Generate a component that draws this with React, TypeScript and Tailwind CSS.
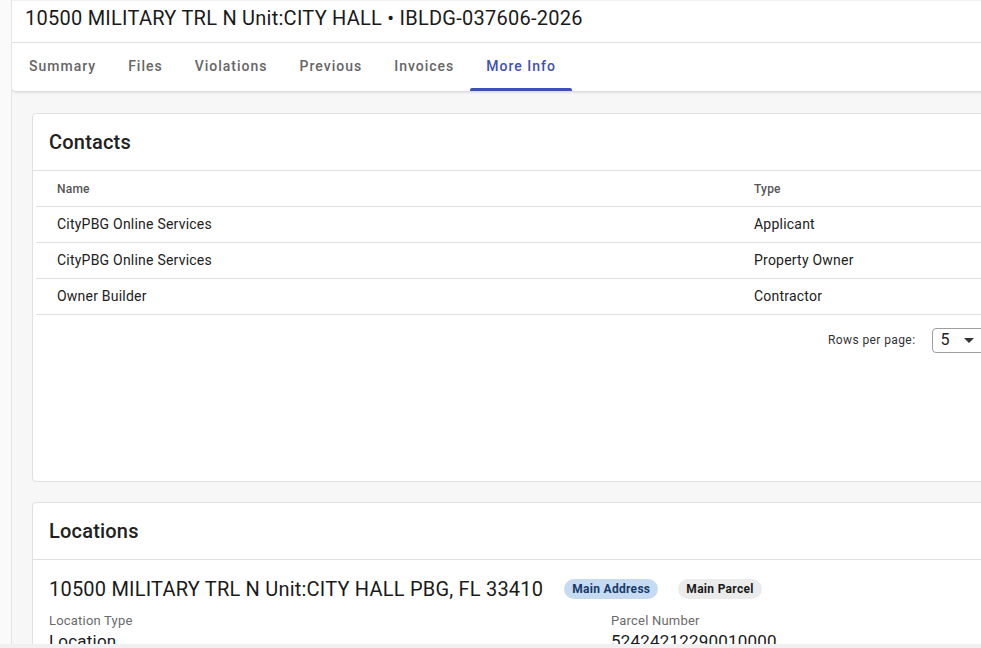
import React from 'react'

const tabs = ['Summary', 'Files', 'Violations', 'Previous', 'Invoices', 'More Info']

const contacts = [
  { name: 'CityPBG Online Services', type: 'Applicant' },
  { name: 'CityPBG Online Services', type: 'Property Owner' },
  { name: 'Owner Builder', type: 'Contractor' },
]

function CardHeader({ title }: { title: string }) {
  return (
    <div className="h-[57px] border-b border-[#e0e0e0] px-4 flex items-center">
      <h2 className="text-[20px] font-medium text-[#212121] leading-6 tracking-[0.2px]">{title}</h2>
    </div>
  )
}

export default function App() {
  return (
    <div className="w-[981px] h-[648px] overflow-hidden bg-[#f2f2f2] font-['Roboto',sans-serif] text-[#212121] tracking-[0.2px]">
      <div className="flex h-[644px]">
        {/* left rail */}
        <div className="w-[12px] shrink-0 border-r border-[#e4e4e4] bg-[#fafafa]" />

        <div className="flex-1 min-w-0 overflow-hidden bg-[#f7f7f7]">
          <div className="w-[1100px]">
            {/* Page header */}
            <div className="bg-white rounded-bl-[4px] shadow-[0_1px_3px_rgba(0,0,0,0.18)] border-t border-[#f0f0f0]">
              <div className="h-[42px] border-b border-[#e0e0e0] pl-[13px] pt-[4px]">
                <h1 className="text-[20px] leading-[26px] font-normal text-[#1a1a1a] tracking-[0.25px]">
                  10500 MILITARY TRL N Unit:CITY HALL • IBLDG-037606-2026
                </h1>
              </div>
              <div className="h-[48px] flex pl-[1px]">
                {tabs.map((t) => {
                  const active = t === 'More Info'
                  return (
                    <div
                      key={t}
                      className={
                        active
                          ? 'relative px-4 pb-[1px] flex items-center text-[14px] font-medium tracking-[1px] text-[#3f51b5]'
                          : 'relative px-4 pb-[1px] flex items-center text-[14px] font-medium tracking-[1px] text-[#666666]'
                      }
                    >
                      {t}
                      {active && (
                        <span className="absolute left-0 right-0 bottom-0 h-[3px] bg-[#3f51b5] rounded-t-[2px]" />
                      )}
                    </div>
                  )
                })}
              </div>
            </div>

            <div className="pl-[20px] pt-[22px] flex flex-col gap-[20px]">
              {/* Contacts */}
              <div className="bg-white border border-[#e0e0e0] rounded-[4px] h-[369px]">
                <CardHeader title="Contacts" />
                <div className="pl-[3px]">
                  <div className="h-[36px] flex items-center border-b border-[#e0e0e0] text-[12px] font-medium text-[#555555] tracking-[0.2px]">
                    <div className="w-[697px] pl-[21px]">Name</div>
                    <div className="pl-[21px]">Type</div>
                  </div>
                  {contacts.map((c, i) => (
                    <div
                      key={i}
                      className="h-[36px] flex items-center border-b border-[#e0e0e0] text-[14px] text-[#212121] tracking-[0.22px]"
                    >
                      <div className="w-[697px] pl-[21px]">{c.name}</div>
                      <div className="pl-[21px]">{c.type}</div>
                    </div>
                  ))}
                  <div className="h-[50px] flex items-center pl-[792px]">
                    <span className="text-[12px] text-[#333333] tracking-[0.4px]">Rows per page:</span>
                    <div className="ml-[17px] h-[25px] w-[70px] border border-[#9e9e9e] rounded-[4px] flex items-center pl-[7px]">
                      <span className="text-[16px] text-[#212121]">5</span>
                      <svg className="ml-[14px]" width="10" height="5" viewBox="0 0 10 5">
                        <path d="M0 0 L10 0 L5 5 Z" fill="#333333" />
                      </svg>
                    </div>
                  </div>
                </div>
              </div>

              {/* Locations */}
              <div className="bg-white border border-[#e0e0e0] rounded-[4px] h-[300px]">
                <CardHeader title="Locations" />
                <div className="px-4 pt-[17px]">
                  <div className="flex items-center">
                    <h3 className="text-[20px] leading-6 font-normal text-[#1a1a1a] tracking-[0.21px]">
                      10500 MILITARY TRL N Unit:CITY HALL PBG, FL 33410
                    </h3>
                    <span className="ml-[21px] h-[20px] px-[8px] rounded-full bg-[#c6daf1] text-[#173a6a] text-[12px] font-bold tracking-[0.3px] flex items-center">
                      Main Address
                    </span>
                    <span className="ml-[20px] h-[20px] px-[8px] rounded-full bg-[#ebebeb] text-[#1a1a1a] text-[12px] font-bold tracking-[0.3px] flex items-center">
                      Main Parcel
                    </span>
                  </div>
                  <div className="grid grid-cols-[562px_1fr] mt-[11px]">
                    <div>
                      <div className="text-[13px] leading-[18px] text-[#6b6b6b]">Location Type</div>
                      <div className="text-[17px] leading-[22px] text-[#1a1a1a]">Location</div>
                    </div>
                    <div>
                      <div className="text-[13px] leading-[18px] text-[#6b6b6b]">Parcel Number</div>
                      <div className="text-[17px] leading-[22px] text-[#1a1a1a]">52424212290010000</div>
                    </div>
                  </div>
                </div>
              </div>
            </div>
          </div>
        </div>
      </div>
      <div className="h-[4px] bg-[#f0f0f0]" />
    </div>
  )
}
